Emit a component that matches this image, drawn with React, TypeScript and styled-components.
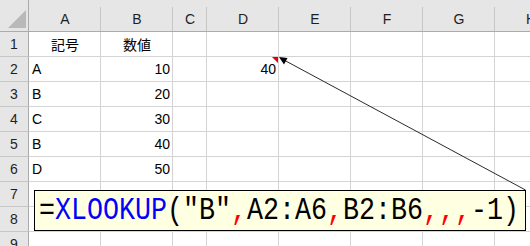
import React from 'react';
import styled, { createGlobalStyle, css } from 'styled-components';

const GlobalStyle = createGlobalStyle`
  html, body {
    margin: 0;
    padding: 0;
    background: #fff;
    overflow: hidden;
  }
  body {
    font-family: "Liberation Sans", "Noto Sans CJK JP", sans-serif;
  }
`;

const Page = styled.div`
  position: relative;
  width: 530px;
  height: 246px;
  overflow: hidden;
  background: #fff;
`;

const Sheet = styled.div`
  display: grid;
  grid-template-columns: 29px 72px 72px 34px repeat(5, 72px);
  grid-template-rows: 32px repeat(9, 25px);
  font-family: "Liberation Sans", "Noto Sans CJK JP", sans-serif;
  font-size: 14px;
  color: #000;
`;

const Corner = styled.div`
  box-sizing: border-box;
  background: #e6e6e6;
  border-right: 1px solid #ababab;
  border-bottom: 1px solid #ababab;
  display: flex;
  align-items: flex-end;
  justify-content: flex-end;
  padding: 0 2px 3px 0;
`;

const ColHead = styled.div`
  box-sizing: border-box;
  border-bottom: 1px solid #ababab;
  background: linear-gradient(#c6c6c6, #c6c6c6) right bottom / 1px 24px no-repeat, #e6e6e6;
  display: flex;
  align-items: center;
  justify-content: center;
  padding-top: 7px;
  color: #1f1f1f;
`;

const RowHead = styled.div`
  box-sizing: border-box;
  background: #e6e6e6;
  border-right: 1px solid #ababab;
  border-bottom: 1px solid #c6c6c6;
  display: flex;
  align-items: center;
  justify-content: center;
  color: #1f1f1f;
`;

type Align = 'left' | 'center' | 'right';

const Cell = styled.div<{ $align?: Align; $note?: boolean }>`
  position: relative;
  box-sizing: border-box;
  border-right: 1px solid #d4d4d4;
  border-bottom: 1px solid #d4d4d4;
  display: flex;
  align-items: center;
  justify-content: ${(p) =>
    p.$align === 'right' ? 'flex-end' : p.$align === 'center' ? 'center' : 'flex-start'};
  padding: 0 2px 0 3px;
  white-space: nowrap;
  ${(p) =>
    p.$note &&
    css`
      &::after {
        content: '';
        position: absolute;
        top: 0;
        right: 0;
        width: 0;
        height: 0;
        border-top: 6px solid #e60000;
        border-left: 6px solid transparent;
      }
    `}
`;

const Callout = styled.div`
  position: absolute;
  left: 34px;
  top: 190px;
  width: 492px;
  height: 41px;
  box-sizing: border-box;
  border: 1px solid #000;
  background: #ffffe1;
  display: flex;
  align-items: center;
  padding-left: 4px;
  overflow: hidden;
`;

const Formula = styled.span`
  display: inline-block;
  flex-shrink: 0;
  font-family: "Liberation Mono", "DejaVu Sans Mono", monospace;
  font-size: 32px;
  line-height: 1;
  white-space: nowrap;
  color: #000;
  transform: scaleX(0.8333);
  transform-origin: left center;
`;

const Fn = styled.span`
  color: #0000ff;
`;

const Sep = styled.span`
  color: #ff0000;
`;

const Leader = styled.svg`
  position: absolute;
  left: 0;
  top: 0;
  pointer-events: none;
`;

type Row = { a?: string; b?: string; d?: string; header?: boolean };

const rows: Row[] = [
  { a: '記号', b: '数値', header: true },
  { a: 'A', b: '10', d: '40' },
  { a: 'B', b: '20' },
  { a: 'C', b: '30' },
  { a: 'B', b: '40' },
  { a: 'D', b: '50' },
  {},
  {},
  {},
];

const letters = ['A', 'B', 'C', 'D', 'E', 'F', 'G', 'H'];

export default function App() {
  return (
    <Page>
      <GlobalStyle />
      <Sheet>
        <Corner>
          <svg width="18" height="18" viewBox="0 0 18 18">
            <polygon points="0,18 18,18 18,0" fill="#b9b9b9" />
          </svg>
        </Corner>
        {letters.map((l) => (
          <ColHead key={l}>{l}</ColHead>
        ))}
        {rows.map((r, i) => (
          <React.Fragment key={i}>
            <RowHead>{i + 1}</RowHead>
            <Cell $align={r.header ? 'center' : 'left'}>{r.a}</Cell>
            <Cell $align={r.header ? 'center' : 'right'}>{r.b}</Cell>
            <Cell />
            <Cell $align="right" $note={!!r.d}>
              {r.d}
            </Cell>
            <Cell />
            <Cell />
            <Cell />
            <Cell />
          </React.Fragment>
        ))}
      </Sheet>

      <Leader width="530" height="246" viewBox="0 0 530 246">
        <line x1="525.5" y1="190" x2="283" y2="59.5" stroke="#2a2a2a" strokeWidth="1" />
        <polygon points="279,57 284,64.5 287.5,58" fill="#000" />
      </Leader>

      <Callout>
        <Formula>
          =<Fn>XLOOKUP</Fn>("B"<Sep>,</Sep>A2:A6<Sep>,</Sep>B2:B6<Sep>,,,</Sep>-1)
        </Formula>
      </Callout>
    </Page>
  );
}
